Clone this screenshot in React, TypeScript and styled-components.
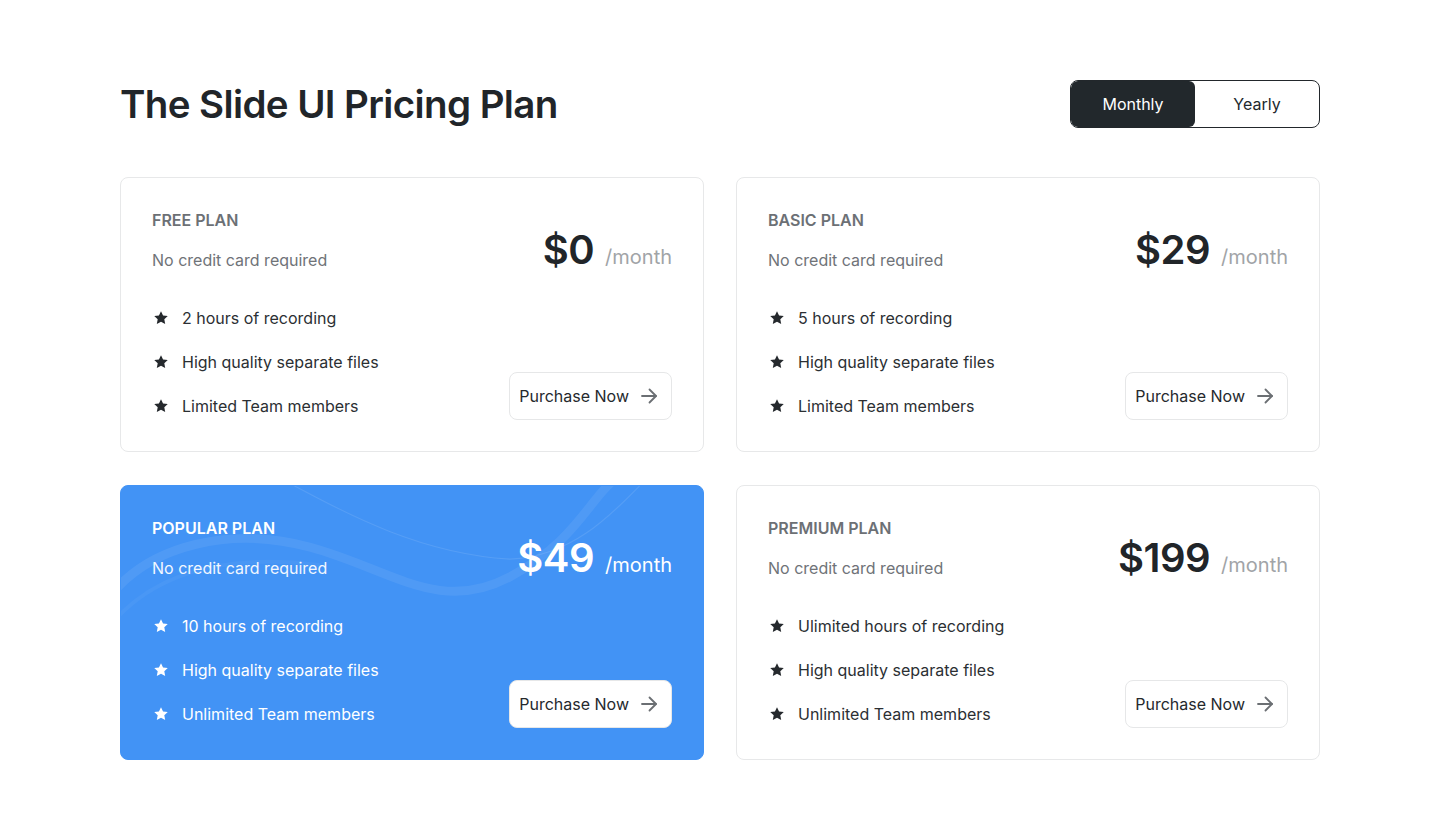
import React from "react";
import styled, { createGlobalStyle } from "styled-components";

const GlobalStyle = createGlobalStyle`
  * { box-sizing: border-box; }
  html, body { margin: 0; padding: 0; background: #ffffff; }
  body {
    font-family: Inter, "Noto Sans", Arial, sans-serif;
    color: #212529;
    -webkit-font-smoothing: antialiased;
  }
`;

const Page = styled.main`
  width: 1200px;
  margin: 0 auto;
  padding-top: 80px;
`;

const Header = styled.header`
  display: flex;
  align-items: center;
  justify-content: space-between;
  margin-bottom: 49px;
`;

const Title = styled.h1`
  margin: 0;
  font-size: 38.5px;
  line-height: 48px;
  font-weight: 600;
  letter-spacing: -0.6px;
  color: #212529;
`;

const Toggle = styled.div`
  display: grid;
  grid-template-columns: 1fr 1fr;
  width: 250px;
  height: 48px;
  border: 1px solid #22272b;
  border-radius: 8px;
  overflow: hidden;
`;

const ToggleOption = styled.button<{ $active?: boolean }>`
  border: none;
  margin: 0;
  padding: 0;
  font-family: inherit;
  font-size: 16px;
  font-weight: 400;
  cursor: pointer;
  border-radius: 6px;
  background: ${(p) => (p.$active ? "#22282c" : "transparent")};
  color: ${(p) => (p.$active ? "#ffffff" : "#22282c")};
`;

const Grid = styled.section`
  display: grid;
  grid-template-columns: 1fr 1fr;
  grid-auto-rows: 275px;
  column-gap: 32px;
  row-gap: 33px;
`;

const Card = styled.article<{ $featured?: boolean }>`
  position: relative;
  overflow: hidden;
  display: flex;
  flex-direction: column;
  padding: 30px 31px 33px;
  border-radius: 8px;
  border: 1px solid ${(p) => (p.$featured ? "#4293f5" : "#e7e8e9")};
  background: ${(p) => (p.$featured ? "#4293f5" : "#ffffff")};
  color: ${(p) => (p.$featured ? "#ffffff" : "#212529")};
`;

const Waves = styled.svg`
  position: absolute;
  inset: 0;
  width: 100%;
  height: 100%;
  pointer-events: none;
`;

const TopRow = styled.div`
  position: relative;
  display: flex;
  justify-content: space-between;
  align-items: flex-end;
`;

const Info = styled.div`
  display: flex;
  flex-direction: column;
  gap: 16px;
`;

const PlanName = styled.h2<{ $featured?: boolean }>`
  margin: 0;
  font-size: 16px;
  line-height: 24px;
  font-weight: 600;
  text-transform: uppercase;
  color: ${(p) => (p.$featured ? "#ffffff" : "#6c7075")};
`;

const Note = styled.p<{ $featured?: boolean }>`
  margin: 0;
  font-size: 16px;
  line-height: 24px;
  color: ${(p) => (p.$featured ? "#f2f7ff" : "#6f7378")};
`;

const Price = styled.div`
  display: flex;
  align-items: baseline;
  gap: 11px;
  margin-bottom: -2px;
`;

const Amount = styled.span<{ $featured?: boolean }>`
  font-size: 40px;
  line-height: 48px;
  font-weight: 600;
  letter-spacing: -0.5px;
  color: ${(p) => (p.$featured ? "#ffffff" : "#212529")};
`;

const Period = styled.span<{ $featured?: boolean }>`
  font-size: 20px;
  line-height: 24px;
  color: ${(p) => (p.$featured ? "#ffffff" : "#a1a4a7")};
`;

const BottomRow = styled.div`
  position: relative;
  display: flex;
  justify-content: space-between;
  align-items: flex-end;
  margin-top: 34px;
`;

const Features = styled.ul`
  list-style: none;
  margin: 0;
  padding: 0;
  display: flex;
  flex-direction: column;
  gap: 20px;
`;

const Feature = styled.li<{ $featured?: boolean }>`
  display: flex;
  align-items: center;
  gap: 13px;
  padding-left: 1px;
  font-size: 16px;
  line-height: 24px;
  color: ${(p) => (p.$featured ? "#ffffff" : "#2b2f33")};
`;

const StarIcon = styled.svg`
  width: 16px;
  height: 16px;
  flex: none;
`;

const BuyButton = styled.button`
  display: flex;
  align-items: center;
  gap: 8px;
  height: 48px;
  padding: 0 10px 0 9px;
  margin-bottom: -2px;
  border: 1px solid #e6e7e8;
  border-radius: 8px;
  background: #ffffff;
  font-family: inherit;
  font-size: 16px;
  color: #25292d;
  cursor: pointer;
`;

const ArrowIcon = styled.svg`
  width: 24px;
  height: 24px;
  flex: none;
`;

type Plan = {
  name: string;
  price: string;
  features: string[];
  featured?: boolean;
};

const plans: Plan[] = [
  {
    name: "Free Plan",
    price: "$0",
    features: ["2 hours of recording", "High quality separate files", "Limited Team members"],
  },
  {
    name: "Basic Plan",
    price: "$29",
    features: ["5 hours of recording", "High quality separate files", "Limited Team members"],
  },
  {
    name: "Popular Plan",
    price: "$49",
    featured: true,
    features: ["10 hours of recording", "High quality separate files", "Unlimited Team members"],
  },
  {
    name: "Premium Plan",
    price: "$199",
    features: ["Ulimited hours of recording", "High quality separate files", "Unlimited Team members"],
  },
];

const Star = ({ color }: { color: string }) => (
  <StarIcon viewBox="0 0 16 16" aria-hidden>
    <path
      d="M8 1.2l2.05 4.3 4.7.55-3.45 3.25.9 4.65L8 11.65 3.8 13.95l.9-4.65L1.25 6.05l4.7-.55z"
      fill={color}
    />
  </StarIcon>
);

const Arrow = () => (
  <ArrowIcon viewBox="0 0 24 24" fill="none" stroke="#6b6f73" strokeWidth={1.8} strokeLinecap="round" strokeLinejoin="round" aria-hidden>
    <path d="M5 12h14" />
    <path d="M12.5 5.5L19 12l-6.5 6.5" />
  </ArrowIcon>
);

const Decoration = () => (
  <Waves viewBox="0 0 584 276" preserveAspectRatio="none" aria-hidden>
    <path
      d="M-10 110 C 30 60, 110 40, 190 62 S 320 130, 390 92 S 470 10, 500 -10"
      fill="none"
      stroke="rgba(255,255,255,0.07)"
      strokeWidth={9}
    />
    <path
      d="M165 -5 C 230 30, 300 68, 390 74 C 450 72, 490 32, 525 -5"
      fill="none"
      stroke="rgba(255,255,255,0.1)"
      strokeWidth={1.2}
    />
    <path
      d="M-10 140 C 40 80, 120 70, 200 80"
      fill="none"
      stroke="rgba(255,255,255,0.04)"
      strokeWidth={4}
    />
  </Waves>
);

const PlanCard = ({ plan }: { plan: Plan }) => {
  const f = plan.featured;
  return (
    <Card $featured={f}>
      {f && <Decoration />}
      <TopRow>
        <Info>
          <PlanName $featured={f}>{plan.name}</PlanName>
          <Note $featured={f}>No credit card required</Note>
        </Info>
        <Price>
          <Amount $featured={f}>{plan.price}</Amount>
          <Period $featured={f}>/month</Period>
        </Price>
      </TopRow>
      <BottomRow>
        <Features>
          {plan.features.map((item) => (
            <Feature key={item} $featured={f}>
              <Star color={f ? "#ffffff" : "#25292d"} />
              {item}
            </Feature>
          ))}
        </Features>
        <BuyButton>
          Purchase Now
          <Arrow />
        </BuyButton>
      </BottomRow>
    </Card>
  );
};

export default function App() {
  return (
    <>
      <GlobalStyle />
      <Page>
        <Header>
          <Title>The Slide UI Pricing Plan</Title>
          <Toggle>
            <ToggleOption $active>Monthly</ToggleOption>
            <ToggleOption>Yearly</ToggleOption>
          </Toggle>
        </Header>
        <Grid>
          {plans.map((p) => (
            <PlanCard key={p.name} plan={p} />
          ))}
        </Grid>
      </Page>
    </>
  );
}
